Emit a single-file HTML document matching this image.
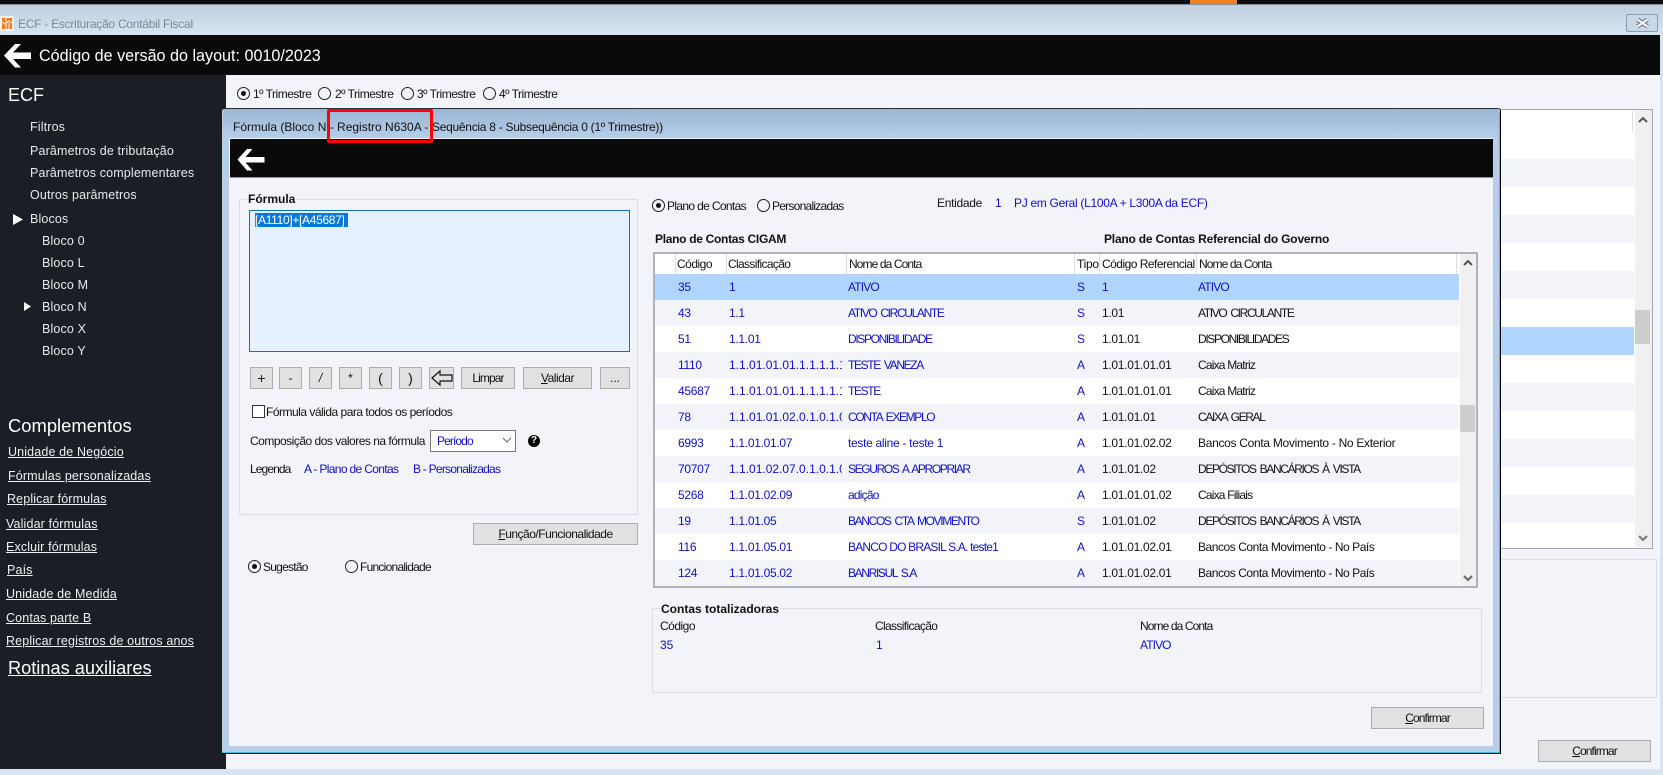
<!DOCTYPE html>
<html lang="pt"><head><meta charset="utf-8"><title>ECF</title>
<style>
*{box-sizing:border-box}
html,body{margin:0;padding:0;width:1663px;height:775px;overflow:hidden;background:#f2f4f9}
body{position:relative;font-family:"Liberation Sans",sans-serif;font-size:12px;color:#111}
.a{position:absolute}
.t{position:absolute;white-space:nowrap;height:16px;line-height:16px}
.w{color:#fff}
.side{color:#e8e8e8;font-size:12.5px;letter-spacing:.15px}
.lnk{color:#f0f0f0;font-size:12.5px;text-decoration:underline;letter-spacing:.14px}
.b{color:#1010c4}
.btn{position:absolute;background:#e1e1e1;border:1px solid #adadad;text-align:center;line-height:20px;height:22px;color:#111;white-space:nowrap}
.rd{position:absolute;width:13px;height:13px;border:1px solid #222;border-radius:50%}
.rd.on::after{content:"";position:absolute;left:3px;top:3px;width:5px;height:5px;border-radius:50%;background:#111}
.row{position:absolute;left:655px;width:804px;height:26px;color:#1010c4;background:#fff}
.row.g{background:#f2f4f9}
.row.s{background:#b0d6ff}
.row span{position:absolute;top:5px;height:16px;line-height:16px;white-space:nowrap;letter-spacing:-.3px}
.row span.u{letter-spacing:-1.35px;word-spacing:2px}
.row span.m{letter-spacing:-.8px}
.row span.z{letter-spacing:0}
.c1{left:23px}.c2{left:74px;width:113px;overflow:hidden}.c3{left:193px}.c4{left:422px}.c5{left:447px;color:#111}.c6{left:543px;color:#111}
.row.s .c5,.row.s .c6{color:#1010c4}
.sep{position:absolute;top:254px;width:1px;height:20px;background:#dcdcdc}
.bk{position:absolute;left:1500px;width:134px;height:28px}
.bk.g{background:#f2f4f9}
.l3{letter-spacing:-.3px}.l5{letter-spacing:-.5px}.l6{letter-spacing:-.65px}.l7{letter-spacing:-.75px}.l9{letter-spacing:-.9px}
</style></head><body>

<!-- top bar -->
<div class="a" style="left:0;top:0;width:1663px;height:4px;background:#0b0b0c"></div>
<div class="a" style="left:1190px;top:0;width:47px;height:4px;background:#f0801f"></div>
<div class="a" style="left:0;top:4px;width:1663px;height:1px;background:#8a8f94"></div>
<div class="a" style="left:0;top:5px;width:1663px;height:30px;background:linear-gradient(#bfcfdf,#d7e5f2)"></div>
<svg class="a" style="left:0;top:16px" width="14" height="15" viewBox="0 0 14 15"><rect width="14" height="15" fill="#f4f4f4"/><rect x="2" y="2" width="10" height="11" fill="#ee7a22"/><path d="M2 6l3 2 4-3 3 2M6 2v11M9 7v6" stroke="#fff" fill="none"/></svg>
<div class="t" style="left:18px;top:16px;color:#7d8996;letter-spacing:-.25px">ECF - Escrituração Contábil Fiscal</div>
<div class="a" style="left:1626px;top:14px;width:32px;height:18px;border:1px solid #8b9bb5;border-radius:2px;background:#c9d8e8"></div>
<svg class="a" style="left:1635px;top:17px" width="15" height="12" viewBox="0 0 15 12"><path d="M2.500 2.500l10 7M12.500 2.500l-10 7" stroke="#5f6772" stroke-width="4.400"/><path d="M2.500 2.500l10 7M12.500 2.500l-10 7" stroke="#eef1f5" stroke-width="2.400"/></svg>

<!-- header -->
<div class="a" style="left:1660px;top:35px;width:3px;height:740px;background:#d7e4f1"></div>
<div class="a" style="left:0;top:35px;width:1660px;height:40px;background:#0a0a0b"></div>
<svg class="a" style="left:0;top:40px" width="36" height="32" viewBox="0 0 36 32"><path d="M4 15.500L15 4h6l-8 8.500h18v6.500H13l8 8.500h-6z" fill="#fff"/></svg>
<div class="t w" style="left:39px;top:47px;font-size:16.150px;height:18px;line-height:18px">Código de versão do layout: 0010/2023</div>

<!-- sidebar -->
<div class="a" style="left:0;top:75px;width:226px;height:694px;background:#1b1e25"></div>
<div class="a" style="left:0;top:769px;width:1663px;height:6px;background:#d7e4f1"></div>
<div class="t w" style="left:8px;top:85px;font-size:18px;height:20px;line-height:20px">ECF</div>
<div class="t side" style="left:30px;top:119px">Filtros</div>
<div class="t side" style="left:30px;top:143px">Parâmetros de tributação</div>
<div class="t side" style="left:30px;top:165px">Parâmetros complementares</div>
<div class="t side" style="left:30px;top:187px">Outros parâmetros</div>
<svg class="a" style="left:13px;top:214px" width="11" height="11"><path d="M0 0l10 5.500L0 11z" fill="#fff"/></svg>
<div class="t side" style="left:30px;top:211px">Blocos</div>
<div class="t side" style="left:42px;top:233px">Bloco 0</div>
<div class="t side" style="left:42px;top:255px">Bloco L</div>
<div class="t side" style="left:42px;top:277px">Bloco M</div>
<svg class="a" style="left:24px;top:302px" width="8" height="9"><path d="M0 0l7 4.500L0 9z" fill="#fff"/></svg>
<div class="t side" style="left:42px;top:299px">Bloco N</div>
<div class="t side" style="left:42px;top:321px">Bloco X</div>
<div class="t side" style="left:42px;top:343px">Bloco Y</div>
<div class="t w" style="left:8px;top:414px;font-size:18.400px;height:24px;line-height:24px">Complementos</div>
<div class="t lnk" style="left:8px;top:444px">Unidade de Negócio</div>
<div class="t lnk" style="left:8px;top:468px">Fórmulas personalizadas</div>
<div class="t lnk" style="left:7px;top:491px">Replicar fórmulas</div>
<div class="t lnk" style="left:6px;top:516px">Validar fórmulas</div>
<div class="t lnk" style="left:6px;top:539px">Excluir fórmulas</div>
<div class="t lnk" style="left:7px;top:562px">País</div>
<div class="t lnk" style="left:6px;top:586px">Unidade de Medida</div>
<div class="t lnk" style="left:6px;top:610px">Contas parte B</div>
<div class="t lnk" style="left:6px;top:633px">Replicar registros de outros anos</div>
<div class="t w" style="left:8px;top:656px;font-size:18.200px;height:24px;line-height:24px;text-decoration:underline">Rotinas auxiliares</div>

<!-- main radios -->
<div class="rd on" style="left:237px;top:87px"></div><div class="t l5" style="left:253px;top:86px">1º Trimestre</div>
<div class="rd" style="left:318px;top:87px"></div><div class="t l5" style="left:335px;top:86px">2º Trimestre</div>
<div class="rd" style="left:401px;top:87px"></div><div class="t l5" style="left:417px;top:86px">3º Trimestre</div>
<div class="rd" style="left:483px;top:87px"></div><div class="t l5" style="left:499px;top:86px">4º Trimestre</div>

<!-- background table -->
<div class="a" style="left:1400px;top:109px;width:253px;height:440px;background:#fff;border:1px solid #a3a6ab"></div>
<div class="a" style="left:1632px;top:111px;width:1px;height:20px;background:#dcdcdc"></div>
<div class="bk g" style="top:159px"></div><div class="bk g" style="top:215px"></div><div class="bk g" style="top:271px"></div>
<div class="bk" style="top:327px;background:#b0d6ff"></div>
<div class="bk g" style="top:383px"></div><div class="bk g" style="top:439px"></div><div class="bk g" style="top:495px"></div>
<div class="a" style="left:1635px;top:110px;width:17px;height:437px;background:#f0f0f0"></div>
<div class="a" style="left:1635px;top:310px;width:15px;height:34px;background:#cdcdcd"></div>
<svg class="a" style="left:1638px;top:116px" width="10" height="8"><path d="M1 6l4-4 4 4" stroke="#555" stroke-width="2" fill="none"/></svg>
<svg class="a" style="left:1638px;top:534px" width="10" height="8"><path d="M1 2l4 4 4-4" stroke="#777" stroke-width="2" fill="none"/></svg>
<div class="a" style="left:1400px;top:559px;width:257px;height:139px;border:1px solid #dcdee2"></div>
<div class="btn l9" style="left:1538px;top:740px;width:113px"><u>C</u>onfirmar</div>

<!-- dialog -->
<div class="a" style="left:222px;top:108px;width:1279px;height:646px;background:#b6cee8;border-top:1px solid #2a3038;border-right:1px solid #000;border-bottom:1px solid #000;border-radius:3px 3px 0 0"></div>
<div class="a" style="left:1499px;top:112px;width:1px;height:641px;background:#34c4e0"></div>
<div class="a" style="left:222px;top:752px;width:1278px;height:1px;background:#34c4e0"></div>
<div class="a" style="left:223px;top:109px;width:1276px;height:29px;background:linear-gradient(#9bb6d3,#b5cee8);border-radius:3px 3px 0 0"></div>
<div class="a" style="left:229px;top:138px;width:1264px;height:608px;background:#f2f4f9"></div>
<div class="t" style="left:233px;top:119px">Fórmula (Bloco N - Registro N630A -</div>
<div class="t" style="left:432px;top:119px;letter-spacing:-.28px">Sequência 8 - Subsequência 0 (1º Trimestre))</div>
<div class="a" style="left:230px;top:139px;width:1263px;height:38px;background:#0a0a0b"></div>
<div class="a" style="left:230px;top:177px;width:1263px;height:1px;background:#8f9296"></div>
<svg class="a" style="left:234px;top:146px" width="34" height="28" viewBox="0 0 34 28"><path d="M3.500 13.500L13 3h5.500l-7 8h19v5.500h-19l7 8H13z" fill="#fff"/></svg>
<div class="a" style="left:327px;top:109px;width:106px;height:34px;border:3px solid #f00;border-radius:2px"></div>

<!-- formula group -->
<div class="a" style="left:239px;top:199px;width:399px;height:316px;border:1px solid #dcdee2;border-radius:2px"></div>
<div class="t" style="left:247px;top:191px;font-weight:700;background:#f2f4f9;padding:0 1px">Fórmula</div>
<div class="a" style="left:249px;top:210px;width:381px;height:142px;background:#e5f1fe;border:1px solid #0f70c8"></div>
<div class="t" style="left:255px;top:213px;background:#0a78d7;color:#fff;height:14px;line-height:14px;width:93px;letter-spacing:-.32px">[A1110]+[A45687]</div>

<div class="btn" style="left:250px;top:367px;width:23px;font-size:14px">+</div>
<div class="btn" style="left:279px;top:367px;width:23px">-</div>
<div class="btn" style="left:309px;top:367px;width:23px;font-style:italic">/</div>
<div class="btn" style="left:339px;top:367px;width:23px">*</div>
<div class="btn" style="left:369px;top:367px;width:23px;font-size:14px">(</div>
<div class="btn" style="left:399px;top:367px;width:23px;font-size:14px">)</div>
<div class="btn" style="left:429px;top:367px;width:25px"></div>
<svg class="a" style="left:431px;top:369px" width="22" height="18"><path d="M1 9l8-7v4h12v6H9v4z" stroke="#111" stroke-width="1.200" fill="none"/></svg>
<div class="btn l9" style="left:461px;top:367px;width:54px">Limpar</div>
<div class="btn l5" style="left:523px;top:367px;width:69px"><u>V</u>alidar</div>
<div class="btn" style="left:600px;top:367px;width:30px">...</div>

<div class="a" style="left:252px;top:405px;width:13px;height:13px;background:#fff;border:1px solid #333"></div>
<div class="t l5" style="left:266px;top:404px">Fórmula válida para todos os períodos</div>
<div class="t l5" style="left:250px;top:433px">Composição dos valores na fórmula</div>
<div class="a" style="left:430px;top:430px;width:86px;height:22px;background:#fff;border:1px solid #777"></div>
<div class="t b l9" style="left:437px;top:433px">Período</div>
<svg class="a" style="left:502px;top:437px" width="10" height="7"><path d="M1 1l4 4 4-4" stroke="#666" fill="none"/></svg>
<div class="a" style="left:528px;top:435px;width:12px;height:12px;border-radius:50%;background:#000;color:#fff;font:700 10px/12px 'Liberation Sans',sans-serif;text-align:center">?</div>
<div class="t l9" style="left:250px;top:461px">Legenda</div>
<div class="t b l6" style="left:304px;top:461px">A - Plano de Contas</div>
<div class="t b l7" style="left:413px;top:461px">B - Personalizadas</div>

<div class="btn l5" style="left:473px;top:523px;width:165px"><u>F</u>unção/Funcionalidade</div>
<div class="rd on" style="left:248px;top:560px"></div><div class="t l7" style="left:263px;top:559px">Sugestão</div>
<div class="rd" style="left:345px;top:560px"></div><div class="t l7" style="left:360px;top:559px">Funcionalidade</div>

<!-- right top -->
<div class="rd on" style="left:652px;top:199px"></div><div class="t l6" style="left:667px;top:198px">Plano de Contas</div>
<div class="rd" style="left:757px;top:199px"></div><div class="t l7" style="left:772px;top:198px">Personalizadas</div>
<div class="t l3" style="left:937px;top:195px">Entidade</div>
<div class="t b" style="left:995px;top:195px">1</div>
<div class="t b l3" style="left:1014px;top:195px">PJ em Geral (L100A + L300A da ECF)</div>
<div class="t" style="left:655px;top:231px;font-weight:700;letter-spacing:-.3px">Plano de Contas CIGAM</div>
<div class="t" style="left:1104px;top:231px;font-weight:700;letter-spacing:-.2px">Plano de Contas Referencial do Governo</div>

<!-- table -->
<div class="a" style="left:653px;top:252px;width:825px;height:336px;background:#fff;border:2px solid #b0b2b6"></div>
<div class="sep" style="left:675px"></div><div class="sep" style="left:726px"></div><div class="sep" style="left:846px"></div><div class="sep" style="left:1074px"></div><div class="sep" style="left:1099px"></div><div class="sep" style="left:1196px"></div><div class="sep" style="left:1456px"></div>
<div class="t l5" style="left:677px;top:256px">Código</div>
<div class="t l6" style="left:728px;top:256px">Classificação</div>
<div class="t l9" style="left:849px;top:256px">Nome da Conta</div>
<div class="t l3" style="left:1077px;top:256px">Tipo</div>
<div class="t" style="left:1102px;top:256px;letter-spacing:-.52px">Código Referencial</div>
<div class="t l9" style="left:1199px;top:256px">Nome da Conta</div>

<div class="row s" style="top:274px"><span class="c1">35</span><span class="c2">1</span><span class="c3 u" style="letter-spacing:-.85px">ATIVO</span><span class="c4">S</span><span class="c5">1</span><span class="c6 u" style="letter-spacing:-.85px">ATIVO</span></div>
<div class="row g" style="top:300px"><span class="c1">43</span><span class="c2">1.1</span><span class="c3 u">ATIVO CIRCULANTE</span><span class="c4">S</span><span class="c5">1.01</span><span class="c6 u">ATIVO CIRCULANTE</span></div>
<div class="row" style="top:326px"><span class="c1">51</span><span class="c2">1.1.01</span><span class="c3 u">DISPONIBILIDADE</span><span class="c4">S</span><span class="c5">1.01.01</span><span class="c6 u">DISPONIBILIDADES</span></div>
<div class="row g" style="top:352px"><span class="c1">1110</span><span class="c2 z">1.1.01.01.01.1.1.1.1.1</span><span class="c3 u">TESTE VANEZA</span><span class="c4">A</span><span class="c5">1.01.01.01.01</span><span class="c6 m">Caixa Matriz</span></div>
<div class="row" style="top:378px"><span class="c1">45687</span><span class="c2 z">1.1.01.01.01.1.1.1.1.1</span><span class="c3 u">TESTE</span><span class="c4">A</span><span class="c5">1.01.01.01.01</span><span class="c6 m">Caixa Matriz</span></div>
<div class="row g" style="top:404px"><span class="c1">78</span><span class="c2 z">1.1.01.01.02.0.1.0.1.0</span><span class="c3 u">CONTA EXEMPLO</span><span class="c4">A</span><span class="c5">1.01.01.01</span><span class="c6 u">CAIXA GERAL</span></div>
<div class="row" style="top:430px"><span class="c1">6993</span><span class="c2">1.1.01.01.07</span><span class="c3">teste aline - teste 1</span><span class="c4">A</span><span class="c5">1.01.01.02.02</span><span class="c6">Bancos Conta Movimento - No Exterior</span></div>
<div class="row g" style="top:456px"><span class="c1">70707</span><span class="c2 z">1.1.01.02.07.0.1.0.1.0</span><span class="c3 u">SEGUROS A APROPRIAR</span><span class="c4">A</span><span class="c5">1.01.01.02</span><span class="c6 u">DEPÓSITOS BANCÁRIOS À VISTA</span></div>
<div class="row" style="top:482px"><span class="c1">5268</span><span class="c2">1.1.01.02.09</span><span class="c3 m">adição</span><span class="c4">A</span><span class="c5">1.01.01.01.02</span><span class="c6 m">Caixa Filiais</span></div>
<div class="row g" style="top:508px"><span class="c1">19</span><span class="c2">1.1.01.05</span><span class="c3 u">BANCOS CTA MOVIMENTO</span><span class="c4">S</span><span class="c5">1.01.01.02</span><span class="c6 u">DEPÓSITOS BANCÁRIOS À VISTA</span></div>
<div class="row" style="top:534px"><span class="c1">116</span><span class="c2">1.1.01.05.01</span><span class="c3 m">BANCO DO BRASIL S.A. teste1</span><span class="c4">A</span><span class="c5">1.01.01.02.01</span><span class="c6" style="letter-spacing:-.45px">Bancos Conta Movimento - No País</span></div>
<div class="row g" style="top:560px"><span class="c1">124</span><span class="c2">1.1.01.05.02</span><span class="c3 u">BANRISUL S.A</span><span class="c4">A</span><span class="c5">1.01.01.02.01</span><span class="c6" style="letter-spacing:-.45px">Bancos Conta Movimento - No País</span></div>

<div class="a" style="left:1460px;top:254px;width:16px;height:332px;background:#f0f0f0"></div>
<div class="a" style="left:1460px;top:405px;width:15px;height:27px;background:#cdcdcd"></div>
<svg class="a" style="left:1463px;top:259px" width="10" height="8"><path d="M1 6l4-4 4 4" stroke="#555" stroke-width="2" fill="none"/></svg>
<svg class="a" style="left:1463px;top:574px" width="10" height="8"><path d="M1 2l4 4 4-4" stroke="#666" stroke-width="2" fill="none"/></svg>

<!-- totalizadoras -->
<div class="a" style="left:652px;top:608px;width:830px;height:85px;border:1px solid #dcdee2"></div>
<div class="t" style="left:660px;top:601px;font-weight:700;background:#f2f4f9;padding:0 1px">Contas totalizadoras</div>
<div class="t l5" style="left:660px;top:618px">Código</div>
<div class="t l6" style="left:875px;top:618px">Classificação</div>
<div class="t l9" style="left:1140px;top:618px">Nome da Conta</div>
<div class="t b" style="left:660px;top:637px">35</div>
<div class="t b" style="left:876px;top:637px">1</div>
<div class="t b l9" style="left:1140px;top:637px">ATIVO</div>
<div class="btn l9" style="left:1371px;top:707px;width:113px"><u>C</u>onfirmar</div>
</body></html>
